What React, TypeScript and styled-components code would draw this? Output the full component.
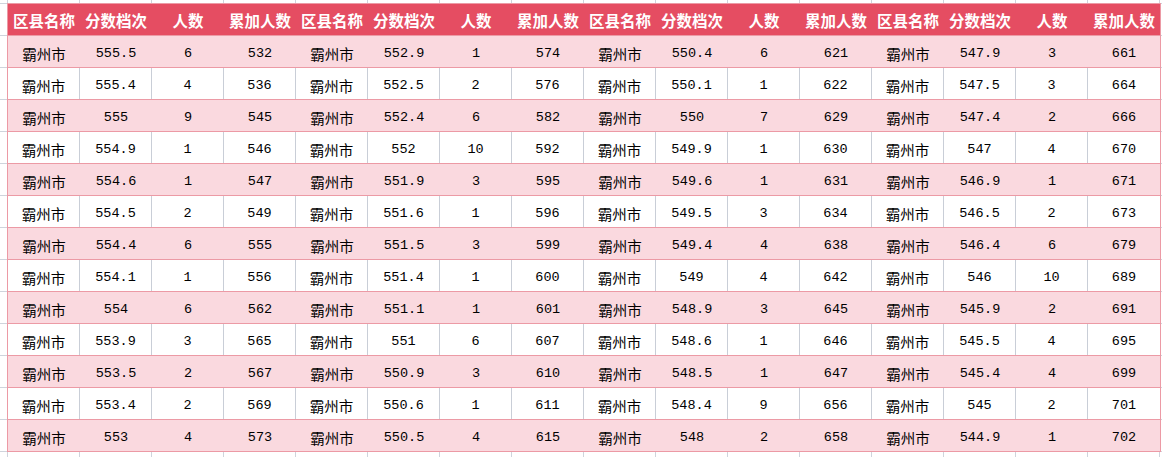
import styled, { createGlobalStyle } from "styled-components";

const GlobalStyle = createGlobalStyle`
  html, body {
    margin: 0;
    padding: 0;
    background: #fff;
  }
  * {
    box-sizing: border-box;
  }
`;

const Sheet = styled.div`
  width: 1162px;
  height: 457px;
  overflow: hidden;
  padding: 3px 0 0 7px;
  background-color: #fff;
  background-image: linear-gradient(to right, #cfd4dc 1px, transparent 1px),
    linear-gradient(to bottom, #cfd4dc 1px, transparent 1px);
  background-size: 72px 32px;
  background-position: 7px 3px;
`;

const Table = styled.div`
  width: 1154px;
  border-top: 1px solid #ec9aa5;
  border-left: 1px solid #ec9aa5;
  border-right: 1px solid #ec9aa5;
`;

const Row = styled.div<{ $kind: "head" | "pink" | "white" }>`
  display: grid;
  grid-template-columns: repeat(16, 72px);
  height: 32px;
  border-bottom: 1px solid #ec9aa5;
  background: ${(p) =>
    p.$kind === "head" ? "#e54d62" : p.$kind === "pink" ? "#fad9df" : "#fff"};
`;

const HeadCell = styled.div`
  display: flex;
  align-items: center;
  justify-content: center;
  color: #fff;
  font-family: "Noto Sans CJK SC", sans-serif;
  font-weight: 700;
  font-size: 15.5px;
  white-space: nowrap;
  padding-top: 1px;
`;

const Cell = styled.div<{ $lined: boolean; $cjk?: boolean }>`
  display: flex;
  align-items: center;
  justify-content: center;
  padding-top: 3px;
  color: #000;
  white-space: nowrap;
  font-family: ${(p) =>
    p.$cjk ? `"Noto Sans CJK SC", sans-serif` : `"Liberation Mono", monospace`};
  font-size: ${(p) => (p.$cjk ? "14.5px" : "13.5px")};
  border-right: ${(p) => (p.$lined ? "1px solid #c9ced7" : "none")};
`;

const headers = ["区县名称", "分数档次", "人数", "累加人数"];

// [分数, 人数, 累加] per block, 4 blocks side by side
const blocks: [string, number, number][][] = [
  [
    ["555.5", 6, 532],
    ["555.4", 4, 536],
    ["555", 9, 545],
    ["554.9", 1, 546],
    ["554.6", 1, 547],
    ["554.5", 2, 549],
    ["554.4", 6, 555],
    ["554.1", 1, 556],
    ["554", 6, 562],
    ["553.9", 3, 565],
    ["553.5", 2, 567],
    ["553.4", 2, 569],
    ["553", 4, 573],
  ],
  [
    ["552.9", 1, 574],
    ["552.5", 2, 576],
    ["552.4", 6, 582],
    ["552", 10, 592],
    ["551.9", 3, 595],
    ["551.6", 1, 596],
    ["551.5", 3, 599],
    ["551.4", 1, 600],
    ["551.1", 1, 601],
    ["551", 6, 607],
    ["550.9", 3, 610],
    ["550.6", 1, 611],
    ["550.5", 4, 615],
  ],
  [
    ["550.4", 6, 621],
    ["550.1", 1, 622],
    ["550", 7, 629],
    ["549.9", 1, 630],
    ["549.6", 1, 631],
    ["549.5", 3, 634],
    ["549.4", 4, 638],
    ["549", 4, 642],
    ["548.9", 3, 645],
    ["548.6", 1, 646],
    ["548.5", 1, 647],
    ["548.4", 9, 656],
    ["548", 2, 658],
  ],
  [
    ["547.9", 3, 661],
    ["547.5", 3, 664],
    ["547.4", 2, 666],
    ["547", 4, 670],
    ["546.9", 1, 671],
    ["546.5", 2, 673],
    ["546.4", 6, 679],
    ["546", 10, 689],
    ["545.9", 2, 691],
    ["545.5", 4, 695],
    ["545.4", 4, 699],
    ["545", 2, 701],
    ["544.9", 1, 702],
  ],
];

const App = () => {
  const rowCount = blocks[0].length;

  return (
    <Sheet>
      <GlobalStyle />
      <Table>
        <Row $kind="head">
          {blocks.map((_, b) =>
            headers.map((h) => <HeadCell key={`${b}-${h}`}>{h}</HeadCell>)
          )}
        </Row>
        {Array.from({ length: rowCount }).map((_, r) => {
          const pink = r % 2 === 0;
          return (
            <Row key={r} $kind={pink ? "pink" : "white"}>
              {blocks.map((block, b) => {
                const [score, count, total] = block[r];
                const last = b === blocks.length - 1;
                return [
                  <Cell key={`${b}-a`} $lined={!pink} $cjk>
                    霸州市
                  </Cell>,
                  <Cell key={`${b}-b`} $lined={!pink}>
                    {score}
                  </Cell>,
                  <Cell key={`${b}-c`} $lined={!pink}>
                    {count}
                  </Cell>,
                  <Cell key={`${b}-d`} $lined={!pink && !last}>
                    {total}
                  </Cell>,
                ];
              })}
            </Row>
          );
        })}
      </Table>
    </Sheet>
  );
};

export default App;
